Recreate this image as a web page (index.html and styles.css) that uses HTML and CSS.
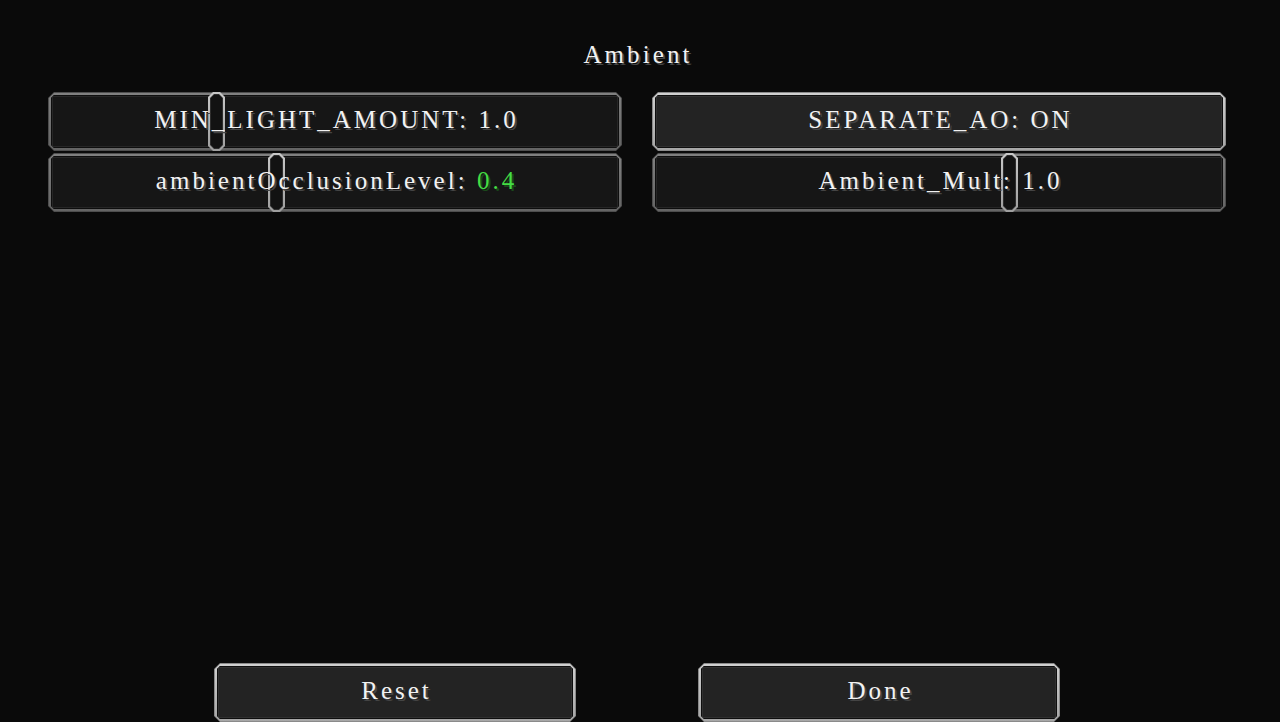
FILE: index.html
```html
<!DOCTYPE html>
<html lang="en">
<head>
<meta charset="utf-8">
<title>Ambient</title>
<link rel="stylesheet" href="styles.css">
</head>
<body>
<main class="screen">
  <h1 class="title">Ambient</h1>
  <section class="options">
    <div class="ctl slider">
      <div class="rim"><div class="line"><div class="fill"></div></div></div>
      <div class="thumb" style="left:160px"><div class="t-line"><div class="t-fill"></div></div></div>
      <span class="label">MIN_LIGHT_AMOUNT: 1.0</span>
    </div>
    <div class="ctl toggle">
      <div class="rim"><div class="line"><div class="fill"></div></div></div>
      <span class="label">SEPARATE_AO: ON</span>
    </div>
    <div class="ctl slider">
      <div class="rim"><div class="line"><div class="fill"></div></div></div>
      <div class="thumb" style="left:220px"><div class="t-line"><div class="t-fill"></div></div></div>
      <span class="label">ambientOcclusionLevel: <span class="val">0.4</span></span>
    </div>
    <div class="ctl slider">
      <div class="rim"><div class="line"><div class="fill"></div></div></div>
      <div class="thumb" style="left:349px"><div class="t-line"><div class="t-fill"></div></div></div>
      <span class="label">Ambient_Mult: 1.0</span>
    </div>
  </section>
  <footer class="actions">
    <div class="ctl toggle wide">
      <div class="rim"><div class="line"><div class="fill"></div></div></div>
      <span class="label">Reset</span>
    </div>
    <div class="ctl toggle wide">
      <div class="rim"><div class="line"><div class="fill"></div></div></div>
      <span class="label">Done</span>
    </div>
  </footer>
</main>
</body>
</html>
```

FILE: styles.css
```css
* { box-sizing: border-box; }
html, body {
  margin: 0;
  padding: 0;
  background: #0a0a0a;
}
body {
  width: 1280px;
  height: 722px;
  overflow: hidden;
  font-family: "Liberation Serif", Tinos, "DejaVu Serif", Times, serif;
  color: #f2f2f2;
}
.screen {
  display: flex;
  flex-direction: column;
  height: 722px;
}
.title {
  margin: 0;
  height: 92px;
  padding-top: 40px;
  padding-right: 4px;
  font-family: inherit;
  font-size: 25px;
  font-weight: normal;
  line-height: 30px;
  letter-spacing: 3.1px;
  text-align: center;
  text-shadow: 2px 2px 0 #474747;
}
.options {
  display: grid;
  grid-template-columns: 574px 574px;
  grid-auto-rows: 59px;
  column-gap: 30px;
  row-gap: 2px;
  padding-left: 48px;
}
.actions {
  margin-top: auto;
  display: flex;
  gap: 122px;
  padding-left: 214px;
  height: 59px;
}
.ctl {
  position: relative;
  height: 59px;
  display: flex;
  align-items: center;
  justify-content: center;
}
.wide { width: 362px; }
.rim, .thumb {
  clip-path: polygon(6px 0, calc(100% - 6px) 0, 100% 6px, 100% calc(100% - 6px), calc(100% - 6px) 100%, 6px 100%, 0 calc(100% - 6px), 0 6px);
}
.rim {
  position: absolute;
  inset: 0;
  padding: 1px;
  background: #5c5c5c;
}
.line {
  height: 100%;
  padding: 2px;
  background: linear-gradient(#a8a8a8, #8a8a8a);
  clip-path: polygon(5px 0, calc(100% - 5px) 0, 100% 5px, 100% calc(100% - 5px), calc(100% - 5px) 100%, 5px 100%, 0 calc(100% - 5px), 0 5px);
}
.fill {
  height: 100%;
  border: 1px solid #0e0e0e;
  outline: 1px solid #3a3a3a;
  outline-offset: -2px;
  clip-path: polygon(3px 0, calc(100% - 3px) 0, 100% 3px, 100% calc(100% - 3px), calc(100% - 3px) 100%, 3px 100%, 0 calc(100% - 3px), 0 3px);
}
.slider .rim { background: #4e4e4e; }
.slider .line { background: linear-gradient(#808080, #646464); }
.slider .fill { background: #161616; outline-color: #262626; }
.toggle .rim { background: #8a8a8a; }
.toggle .line { background: linear-gradient(#d0d0d0, #a6a6a6); }
.toggle .fill { background: #232323; outline-color: #303030; }
.thumb {
  position: absolute;
  top: 0;
  width: 17px;
  height: 59px;
  padding: 2px;
  background: linear-gradient(#c8c8c8, #9e9e9e);
  clip-path: polygon(5px 0, calc(100% - 5px) 0, 100% 5px, 100% calc(100% - 5px), calc(100% - 5px) 100%, 5px 100%, 0 calc(100% - 5px), 0 5px);
}
.t-line {
  height: 100%;
  padding: 1px;
  background: #2e2e2e;
  clip-path: polygon(4px 0, calc(100% - 4px) 0, 100% 4px, 100% calc(100% - 4px), calc(100% - 4px) 100%, 4px 100%, 0 calc(100% - 4px), 0 4px);
}
.t-fill {
  height: 100%;
  background: #121212;
  clip-path: polygon(3px 0, calc(100% - 3px) 0, 100% 3px, 100% calc(100% - 3px), calc(100% - 3px) 100%, 3px 100%, 0 calc(100% - 3px), 0 3px);
}
.label {
  position: relative;
  z-index: 1;
  font-family: inherit;
  font-size: 25px;
  line-height: 30px;
  letter-spacing: 3px;
  white-space: nowrap;
  text-shadow: 2px 2px 0 #444;
  padding-left: 3px;
  margin-top: -3px;
}
.val {
  color: #44dd44;
  text-shadow: 2px 2px 0 #1b4a1b;
}
```
